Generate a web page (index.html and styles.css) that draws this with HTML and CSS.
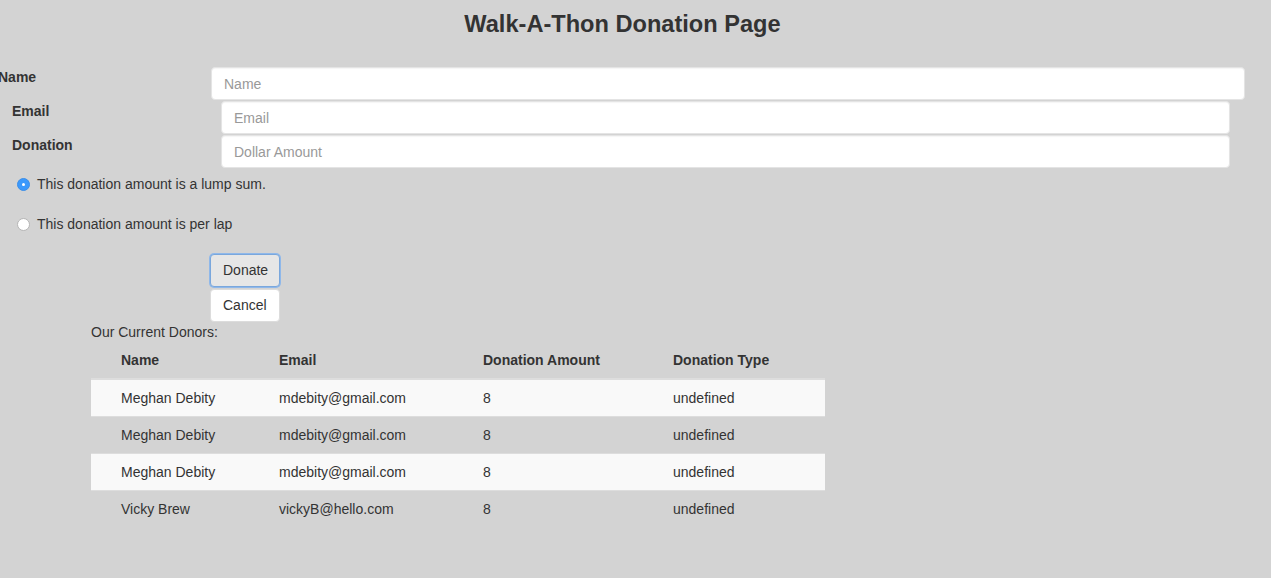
FILE: index.html
```html
<!DOCTYPE html>
<html>
<head>
<meta charset="utf-8">
<link rel="stylesheet" href="styles.css">
</head>
<body>
<h1 class="title">Walk-A-Thon Donation Page</h1>
<form class="donate-form">
  <div class="field field-name">
    <label class="field-label">Name</label>
    <input class="field-input" type="text" placeholder="Name">
  </div>
  <div class="field field-sub">
    <label class="field-label">Email</label>
    <input class="field-input" type="text" placeholder="Email">
  </div>
  <div class="field field-sub">
    <label class="field-label">Donation</label>
    <input class="field-input" type="text" placeholder="Dollar Amount">
  </div>
  <div class="radio-list">
    <label class="radio-row"><input class="radio" type="radio" name="t" checked> This donation amount is a lump sum.</label>
    <label class="radio-row"><input class="radio" type="radio" name="t"> This donation amount is per lap</label>
  </div>
  <div class="buttons">
    <button class="btn btn-focus" type="button">Donate</button>
    <button class="btn" type="button">Cancel</button>
  </div>
</form>
<section class="donors">
  <div class="donors-caption">Our Current Donors:</div>
  <table class="donor-table">
    <thead>
      <tr><th class="c1">Name</th><th class="c2">Email</th><th class="c3">Donation Amount</th><th class="c4">Donation Type</th></tr>
    </thead>
    <tbody>
      <tr class="odd"><td>Meghan Debity</td><td>mdebity@gmail.com</td><td>8</td><td>undefined</td></tr>
      <tr><td>Meghan Debity</td><td>mdebity@gmail.com</td><td>8</td><td>undefined</td></tr>
      <tr class="odd"><td>Meghan Debity</td><td>mdebity@gmail.com</td><td>8</td><td>undefined</td></tr>
      <tr><td>Vicky Brew</td><td>vickyB@hello.com</td><td>8</td><td>undefined</td></tr>
    </tbody>
  </table>
</section>
</body>
</html>
```
FILE: styles.css
```css
html, body {
  margin: 0;
  padding: 0;
  background: #d3d3d3;
}
body {
  font-family: "Liberation Sans", Arial, Helvetica, sans-serif;
  font-size: 14px;
  line-height: 20px;
  color: #333;
  overflow: hidden;
}
.title {
  margin: 0;
  padding: 11px 26px 0 0;
  font-size: 23.6px;
  line-height: 26px;
  font-weight: bold;
  text-align: center;
  color: #333;
}
.donate-form {
  margin-top: 30px;
}
.field {
  display: flex;
  align-items: flex-start;
}
.field-label {
  font-weight: bold;
  line-height: 20px;
  margin-top: 0;
}
.field-name {
  margin-left: -2px;
  margin-right: 26px;
}
.field-name .field-label {
  width: 213px;
}
.field-sub {
  margin-left: 12px;
  margin-right: 41px;
  margin-top: 1px;
}
.field-sub .field-label {
  width: 209px;
}
.field-input {
  flex: 1;
  box-sizing: border-box;
  height: 33px;
  padding: 6px 12px;
  font-family: inherit;
  font-size: 14px;
  color: #555;
  background: #fff;
  border: 1px solid #e4e4e4;
  border-radius: 4px;
  box-shadow: inset 0 1px 1px rgba(0,0,0,0.04);
  outline: none;
}
.field-input::placeholder {
  color: #999;
}
.radio-list {
  display: flex;
  flex-direction: column;
  gap: 20px;
  margin-top: 6px;
  padding-left: 17px;
}
.radio-row {
  display: flex;
  align-items: center;
  gap: 7px;
  line-height: 20px;
}
.radio {
  appearance: none;
  -webkit-appearance: none;
  margin: 0;
  width: 13px;
  height: 13px;
  border-radius: 50%;
  background: #fff;
  border: 1px solid #b5b5b5;
  box-sizing: border-box;
  position: relative;
}
.radio:checked {
  background: #3b99fc;
  border-color: #3b8ee8;
}
.radio:checked::after {
  content: "";
  position: absolute;
  left: 4px;
  top: 4px;
  width: 3px;
  height: 3px;
  border-radius: 50%;
  background: #fff;
}
.buttons {
  display: flex;
  flex-direction: column;
  align-items: flex-start;
  gap: 2px;
  margin-top: 20px;
  margin-left: 210px;
}
.btn {
  font-family: inherit;
  font-size: 14px;
  line-height: 20px;
  padding: 5px 12px 6px;
  color: #333;
  background: #fff;
  border: 1px solid #dcdcdc;
  border-radius: 4px;
}
.btn-focus {
  background: #e6e6e6;
  border-color: #7aa7dc;
  box-shadow: 0 0 0 1px #8fb8ea;
  width: 70px;
}
.donors {
  margin-left: 91px;
  margin-top: 0;
}
.donors-caption {
  line-height: 20px;
}
.donor-table {
  border-collapse: collapse;
  width: 734px;
}
.donor-table th, .donor-table td {
  text-align: left;
  padding: 8px 0 8px 30px;
  line-height: 20px;
}
.donor-table th {
  font-weight: bold;
  border-bottom: 2px solid #ddd;
}
.donor-table td {
  border-top: 1px solid #ddd;
}
.donor-table tbody tr:first-child td {
  border-top: 0;
}
.c1 { width: 128px; }
.c2 { width: 174px; }
.c3 { width: 160px; }
.c4 { width: 152px; }
.odd {
  background: #f9f9f9;
}
```
